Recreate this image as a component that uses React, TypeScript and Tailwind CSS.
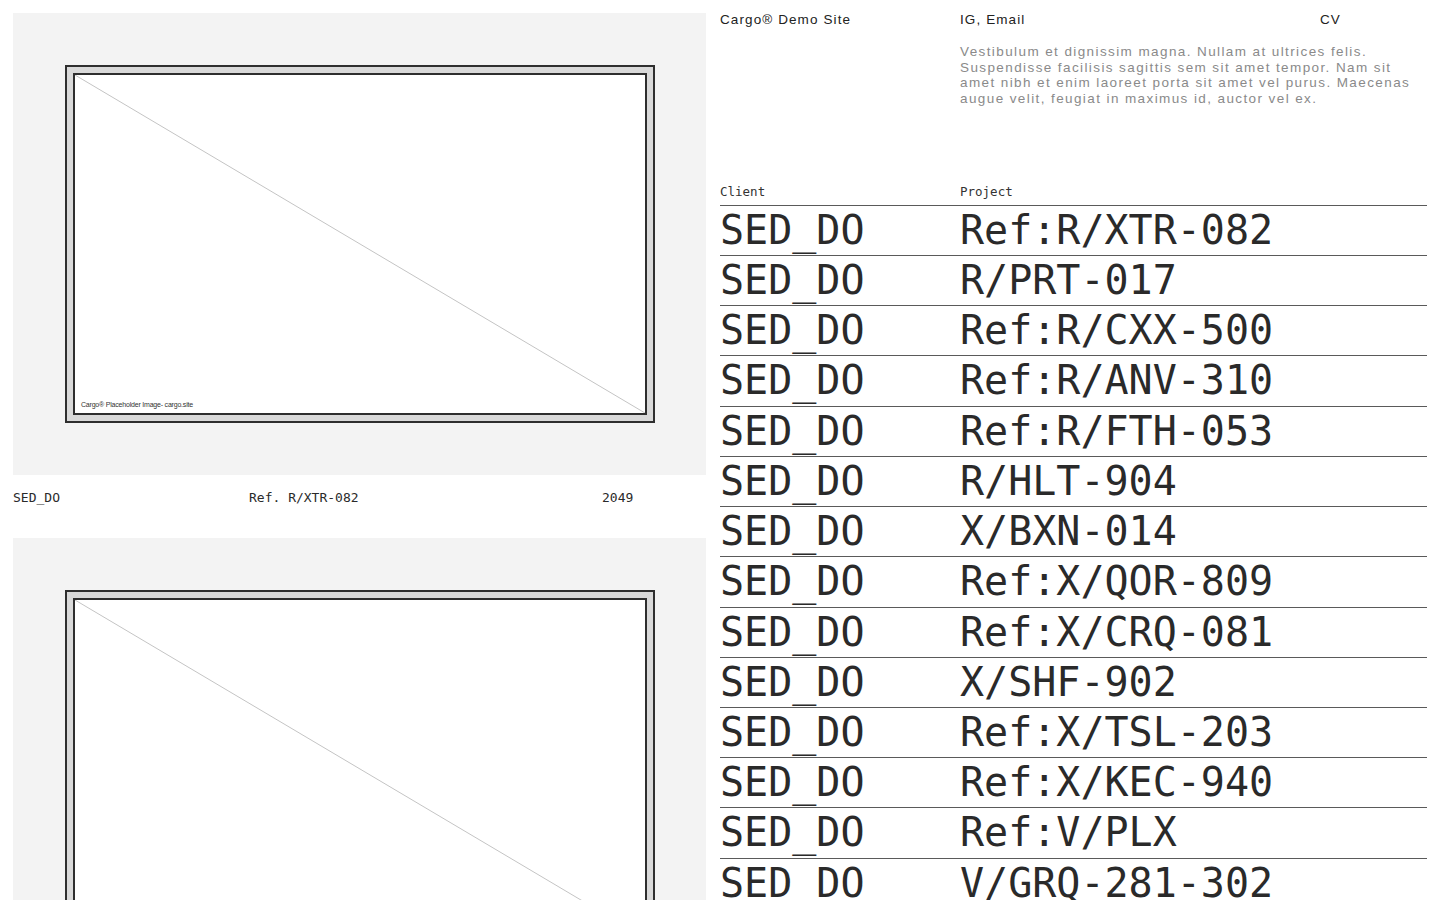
import React from "react";

const rows = [
  "Ref:R/XTR-082",
  "R/PRT-017",
  "Ref:R/CXX-500",
  "Ref:R/ANV-310",
  "Ref:R/FTH-053",
  "R/HLT-904",
  "X/BXN-014",
  "Ref:X/QOR-809",
  "Ref:X/CRQ-081",
  "X/SHF-902",
  "Ref:X/TSL-203",
  "Ref:X/KEC-940",
  "Ref:V/PLX",
  "V/GRQ-281-302",
];

const mono = { fontFamily: '"DejaVu Sans Mono", "Liberation Mono", monospace' };
const narrow = { fontFamily: '"Liberation Sans Narrow", "Liberation Sans", Arial, sans-serif' };

function Placeholder() {
  return (
    <div className="bg-[#f3f3f3] h-[462px] p-[52px] pr-[51px]">
      <div className="h-full border-2 border-[#2e2e2e] bg-[#d9d9d9] p-[6px]">
        <div className="relative h-full border-2 border-[#2e2e2e] bg-white">
          <svg className="absolute inset-0 w-full h-full" preserveAspectRatio="none" viewBox="0 0 100 100">
            <line x1="0" y1="0" x2="100" y2="100" stroke="#c4c4c4" strokeWidth="1" vectorEffect="non-scaling-stroke" />
          </svg>
          <div
            className="absolute left-[6px] bottom-[5px] text-[7px] leading-none text-[#333] tracking-[-0.2px]"
            style={narrow}
          >
            Cargo® Placeholder Image- cargo.site
          </div>
        </div>
      </div>
    </div>
  );
}

function Caption() {
  return (
    <div className="flex pt-[16px] pb-[33px] text-[13px] leading-[14px] text-[#2a2a2a]" style={mono}>
      <div className="w-[236px]">SED_DO</div>
      <div className="w-[353px]">Ref. R/XTR-082</div>
      <div>2049</div>
    </div>
  );
}

export default function App() {
  return (
    <div className="bg-white h-[900px] overflow-hidden px-[13px] pt-[13px]">
      <div className="grid grid-cols-[693px_707px] gap-[14px]">
        <div>
          <Placeholder />
          <Caption />
          <Placeholder />
        </div>
        <div>
          <div className="grid grid-cols-[240px_360px_1fr] text-[13.5px] leading-[14px] text-[#222] tracking-[1.1px]" style={narrow}>
            <div>Cargo® Demo Site</div>
            <div>IG, Email</div>
            <div>CV</div>
          </div>
          <div className="grid grid-cols-[240px_1fr] mt-[17px]">
            <div />
            <p className="text-[13.5px] leading-[15.7px] text-[#8a8a8a] tracking-[1.4px] w-[467px]" style={narrow}>
              Vestibulum et dignissim magna. Nullam at ultrices felis. Suspendisse facilisis sagittis sem sit amet tempor. Nam sit amet nibh et enim laoreet porta sit amet vel purus. Maecenas augue velit, feugiat in maximus id, auctor vel ex.
            </p>
          </div>
          <div className="mt-[78px] grid grid-cols-[240px_1fr] border-b border-[#5a5a5a] pb-[6px] text-[12.5px] leading-[14px] text-[#333]" style={mono}>
            <div>Client</div>
            <div>Project</div>
          </div>
          {rows.map((r, i) => (
            <div
              key={i}
              className="grid grid-cols-[240px_1fr] border-b border-[#5a5a5a] h-[50.23px] text-[40px] leading-[49px] text-[#2a2a2a]"
              style={mono}
            >
              <div>SED_DO</div>
              <div>{r}</div>
            </div>
          ))}
        </div>
      </div>
    </div>
  );
}
